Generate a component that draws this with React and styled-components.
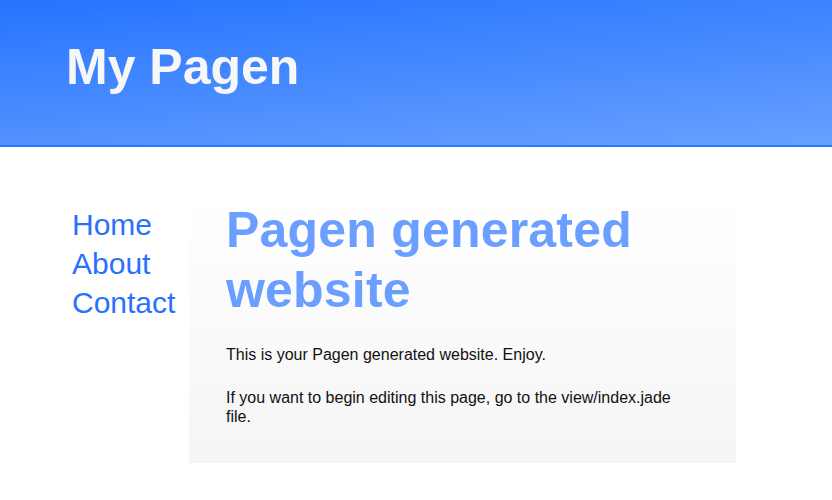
import React from 'react'
import styled, { createGlobalStyle } from 'styled-components'

const Global = createGlobalStyle`
  body {
    margin: 0;
    background: #fff;
    font-family: "Liberation Sans", Arial, Helvetica, sans-serif;
  }
`

const Header = styled.header`
  height: 145px;
  background: linear-gradient(175deg, #2574ff 0%, #4a8cff 55%, #67a1ff 100%);
  border-bottom: 2px solid #2a78ff;
  padding-left: 66px;
  display: flex;
  align-items: flex-start;
`

const Title = styled.h1`
  margin: 0;
  margin-top: 37px;
  font-size: 50px;
  line-height: 60px;
  font-weight: bold;
  color: #f7f7f7;
`

const Main = styled.div`
  display: flex;
  flex-direction: row;
  padding-top: 48px;
`

const Nav = styled.nav`
  width: 117px;
  padding-left: 72px;
  margin-top: 10px;
  display: flex;
  flex-direction: column;
`

const NavLink = styled.a`
  font-size: 30px;
  line-height: 39px;
  color: #2a70ff;
  text-decoration: none;
`

const Content = styled.section`
  width: 452px;
  padding: 5px 58px 37px 37px;
  background: linear-gradient(to bottom, #ffffff 0%, #f5f5f5 100%);
`

const Heading = styled.h2`
  margin: 0 0 25px;
  font-size: 50px;
  line-height: 60px;
  font-weight: bold;
  color: #6a9fff;
  letter-spacing: 0.2px;
`

const Para = styled.p`
  margin: 0 0 24px;
  font-size: 16px;
  line-height: 19px;
  color: #111;

  &:last-child {
    margin-bottom: 0;
  }
`

export default function App() {
  return (
    <>
      <Global />
      <Header>
        <Title>My Pagen</Title>
      </Header>
      <Main>
        <Nav>
          <NavLink href="#">Home</NavLink>
          <NavLink href="#">About</NavLink>
          <NavLink href="#">Contact</NavLink>
        </Nav>
        <Content>
          <Heading>Pagen generated website</Heading>
          <Para>This is your Pagen generated website. Enjoy.</Para>
          <Para>If you want to begin editing this page, go to the view/index.jade file.</Para>
        </Content>
      </Main>
    </>
  )
}
